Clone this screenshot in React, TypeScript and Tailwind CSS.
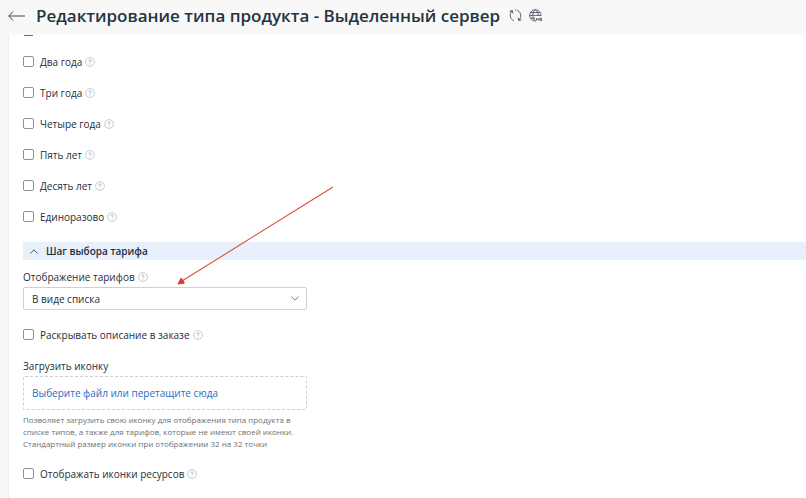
import React from "react";

const periods = [
  { id: "two-years", label: "Два года" },
  { id: "three-years", label: "Три года" },
  { id: "four-years", label: "Четыре года" },
  { id: "five-years", label: "Пять лет" },
  { id: "ten-years", label: "Десять лет" },
  { id: "one-time", label: "Единоразово" },
];

const Hint = () => (
  <button type="button" aria-label="Подсказка" className="shrink-0">
    <svg width="10" height="10" viewBox="0 0 10 10" fill="none">
      <circle cx="5" cy="5" r="4.4" stroke="#b9bdc1" strokeWidth="0.8" />
      <path
        d="M3.8 4C3.8 2.4 6.3 2.5 6.2 3.9C6.1 4.7 5 4.7 5 5.8M5 6.8V7.6"
        stroke="#a0a5aa"
        strokeWidth="0.8"
      />
    </svg>
  </button>
);

type CheckRowProps = { id: string; label: string };

const CheckRow = ({ id, label }: CheckRowProps) => (
  <div className="flex h-[31px] items-center">
    <input
      id={id}
      type="checkbox"
      className="size-[11px] shrink-0 appearance-none rounded-[2px] border border-[#8d9298] bg-white checked:border-[#2f75c0] checked:bg-[#2f75c0]"
    />
    <label htmlFor={id} className="ml-[6px] mr-[3px]">
      {label}
    </label>
    <Hint />
  </div>
);

const Header = () => (
  <header className="flex h-[35px] items-center pb-1 pl-2">
    <button type="button" aria-label="Назад">
      <svg width="17" height="12" viewBox="0 0 17 12" fill="none">
        <path d="M5 1.5L0.8 6L5 10.5M0.8 6H17" stroke="#3c4853" />
      </svg>
    </button>
    <h1 className="ml-[11px] whitespace-nowrap text-[17px] font-semibold text-[#243442]">
      Редактирование типа продукта - Выделенный сервер
    </h1>
    <button type="button" aria-label="Обновить" className="ml-[9px]">
      <svg
        width="13"
        height="13"
        viewBox="0 0 13 13"
        fill="none"
        stroke="#3f4a55"
        strokeWidth="0.9"
      >
        <path d="M0.6 2.2L3.3 1.6L3.9 4.3M3.2 1.8C0.2 4.6 0.5 9.8 4.8 11.7" />
        <path d="M12.4 10.8L9.7 11.4L9.1 8.7M9.8 11.2C12.8 8.4 12.5 3.2 8.2 1.3M6 1.1H7.2" />
      </svg>
    </button>
    <button type="button" aria-label="Язык" className="ml-[7px]">
      <svg
        width="13"
        height="13"
        viewBox="0 0 13 13"
        fill="none"
        stroke="#3f4a55"
        strokeWidth="0.8"
      >
        <path d="M12 7A5.7 5.7 0 1 0 7 12" />
        <path d="M6.3 0.7C2.9 3.2 2.9 9.4 6.3 11.9M6.3 0.7C8.6 2.5 9.4 4.6 9.2 7M0.7 6.4H12M1.5 3.5H11.1M1.5 9.2H6" />
        <path d="M7.4 11.6V9.2L8.7 10.8L10 9.2V11.6M11.2 9.2H12.6V11.6H11.2Z" />
      </svg>
    </button>
  </header>
);

const App = () => {
  return (
    <div className="min-h-screen bg-[#f8f8f8] font-['Open_Sans','Noto_Sans',sans-serif] text-[10px] leading-4 text-[#1f2d3a]">
      <Header />

      <main className="relative ml-2 min-h-[calc(100vh-35px)] border-l border-[#ececec] bg-white pl-[14px]">
        {/* Selected period, scrolled under the header */}
        <div className="flex h-[11px] items-start overflow-hidden px-px">
          <input
            type="checkbox"
            defaultChecked
            aria-label="Год"
            className="m-0 h-px w-[9px] appearance-none border-0 bg-[#2f7fd6]"
          />
        </div>

        {periods.map((period) => (
          <CheckRow key={period.id} id={period.id} label={period.label} />
        ))}

        <button
          type="button"
          className="mt-[10px] flex h-[18px] w-full items-center bg-[#e8f0fc] pl-[7px] font-semibold"
        >
          <svg width="8" height="5" viewBox="0 0 8 5" fill="none">
            <path d="M0.5 4.5L4 0.8L7.5 4.5" stroke="#4a5560" />
          </svg>
          <span className="ml-2">Шаг выбора тарифа</span>
        </button>

        <div className="mt-[9px] w-[284px]">
          <div className="flex items-center">
            <label htmlFor="tariff-view" className="mr-[3px]">
              Отображение тарифов
            </label>
            <Hint />
          </div>
          <div className="relative mt-[2px]">
            <select
              id="tariff-view"
              className="h-[23px] w-full appearance-none rounded-[2px] border border-[#cfd1d4] bg-white px-2"
            >
              <option>В виде списка</option>
            </select>
            <svg
              className="pointer-events-none absolute right-2 top-[9px]"
              width="8"
              height="5"
              viewBox="0 0 8 5"
              fill="none"
            >
              <path d="M0.5 0.5L4 4.2L7.5 0.5" stroke="#7b8188" />
            </svg>
          </div>
        </div>

        <div className="mt-[9px]">
          <CheckRow id="expand" label="Раскрывать описание в заказе" />
        </div>

        <div className="mt-2 w-[284px]">
          <p>Загрузить иконку</p>
          <label className="mt-[2px] flex h-[34px] cursor-pointer items-center rounded-[2px] border border-dashed border-[#cccfd2] px-2 text-[#1a6fc4]">
            Выберите файл или перетащите сюда
            <input type="file" className="sr-only" />
          </label>
          <p className="mt-1 whitespace-nowrap text-[8px] leading-3 text-[#6c7074]">
            Позволяет загрузить свою иконку для отображения типа продукта в
            <br />
            списке типов, а также для тарифов, которые не имеют своей иконки.
            <br />
            Стандартный размер иконки при отображении 32 на 32 точки
          </p>
        </div>

        <div className="mt-2">
          <CheckRow id="resource-icons" label="Отображать иконки ресурсов" />
        </div>

        {/* Arrow pointing at the tariff view field */}
        <svg
          className="pointer-events-none absolute left-[168px] top-[150px]"
          width="158"
          height="100"
          viewBox="0 0 158 100"
          fill="none"
        >
          <path d="M156 2L5 96" stroke="#d9503c" strokeWidth="1.1" />
          <path d="M1 99L4.2 93L7.4 98Z" fill="#d63f2a" stroke="#d63f2a" />
        </svg>
      </main>
    </div>
  );
};

export default App;
